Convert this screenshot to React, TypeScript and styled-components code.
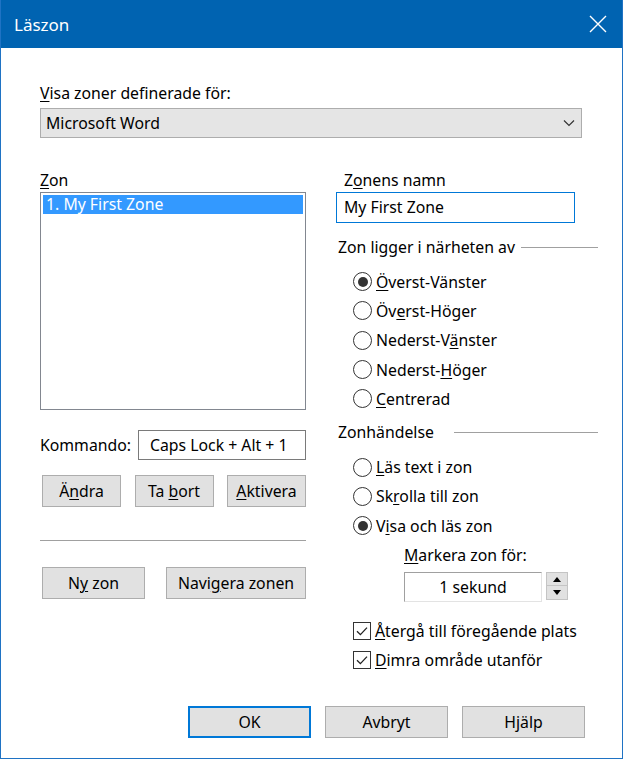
import styled, { createGlobalStyle } from 'styled-components';

const GlobalStyle = createGlobalStyle`
  html, body {
    margin: 0;
    padding: 0;
    background: #ffffff;
  }
  body {
    font-family: 'Noto Sans', 'Open Sans', sans-serif;
    color: #000000;
  }
`;

const FONT = `'Noto Sans', 'Open Sans', sans-serif`;

// 위치 라디오 옵션
const positions = [
  { pre: '', key: 'Ö', post: 'verst-Vänster', checked: true },
  { pre: 'Öv', key: 'e', post: 'rst-Höger', checked: false },
  { pre: 'Nederst-V', key: 'ä', post: 'nster', checked: false },
  { pre: 'Nederst-', key: 'H', post: 'öger', checked: false },
  { pre: '', key: 'C', post: 'entrerad', checked: false },
];

// 이벤트 라디오 옵션
const events = [
  { pre: '', key: 'L', post: 'äs text i zon', checked: false },
  { pre: 'Sk', key: 'r', post: 'olla till zon', checked: false },
  { pre: 'V', key: 'i', post: 'sa och läs zon', checked: true },
];

const Radio = ({ checked }: { checked: boolean }) => (
  <RadioCircle>{checked && <RadioDot />}</RadioCircle>
);

const CheckBox = () => (
  <CheckSquare>
    <svg width="14" height="14" viewBox="0 0 14 14">
      <path d="M2 7.2 L5.4 10.6 L12 3.6" fill="none" stroke="#222" strokeWidth="1.3" />
    </svg>
  </CheckSquare>
);

const App = () => {
  return (
    <>
      <GlobalStyle />
      <Window>
        <TitleBar>
          <TitleText>Läszon</TitleText>
          <CloseIcon width="18" height="18" viewBox="0 0 18 18">
            <path d="M1 1 L17 17 M17 1 L1 17" stroke="#ffffff" strokeWidth="1.4" />
          </CloseIcon>
        </TitleBar>

        <Body>
          <Label>
            <u>V</u>isa zoner definerade för:
          </Label>
          <Combo>
            <span>Microsoft Word</span>
            <svg width="12" height="8" viewBox="0 0 12 8">
              <path d="M1 1.5 L6 6.5 L11 1.5" fill="none" stroke="#333" strokeWidth="1.2" />
            </svg>
          </Combo>

          <Columns>
            <LeftColumn>
              <Label>
                <u>Z</u>on
              </Label>
              <ListBox>
                <ListItem selected>1. My First Zone</ListItem>
              </ListBox>

              <CommandRow>
                <Label>Kommando:</Label>
                <CommandBox>Caps Lock + Alt + 1</CommandBox>
              </CommandRow>

              <ButtonRow>
                <Button width={79}>
                  <span>
                    Ä<u>n</u>dra
                  </span>
                </Button>
                <Button width={79}>
                  <span>
                    Ta <u>b</u>ort
                  </span>
                </Button>
                <Button width={79}>
                  <span>
                    <u>A</u>ktivera
                  </span>
                </Button>
              </ButtonRow>

              <Separator />

              <ButtonRow>
                <Button width={103}>
                  <span>
                    N<u>y</u> zon
                  </span>
                </Button>
                <Button width={140}>
                  <span>
                    Navi<u>g</u>era zonen
                  </span>
                </Button>
              </ButtonRow>
            </LeftColumn>

            <RightColumn>
              <NameLabel>
                Z<u>o</u>nens namn
              </NameLabel>
              <TextBox>My First Zone</TextBox>

              <GroupHeader lineGap={6}>
                <span>Zon ligger i närheten av</span>
                <GroupLine />
              </GroupHeader>
              <OptionList>
                {positions.map((p, i) => (
                  <OptionRow key={i}>
                    <Radio checked={p.checked} />
                    <span>
                      {p.pre}
                      <u>{p.key}</u>
                      {p.post}
                    </span>
                  </OptionRow>
                ))}
              </OptionList>

              <GroupHeader lineGap={20}>
                <span>Zonhändelse</span>
                <GroupLine />
              </GroupHeader>
              <OptionList>
                {events.map((p, i) => (
                  <OptionRow key={i}>
                    <Radio checked={p.checked} />
                    <span>
                      {p.pre}
                      <u>{p.key}</u>
                      {p.post}
                    </span>
                  </OptionRow>
                ))}
              </OptionList>

              <MarkBlock>
                <Label>
                  <u>M</u>arkera zon för:
                </Label>
                <SpinRow>
                  <SpinField>1 sekund</SpinField>
                  <SpinButtons>
                    <SpinButton>
                      <svg width="8" height="5" viewBox="0 0 8 5">
                        <path d="M0 5 L4 0 L8 5 Z" fill="#000" />
                      </svg>
                    </SpinButton>
                    <SpinButton>
                      <svg width="8" height="5" viewBox="0 0 8 5">
                        <path d="M0 0 L4 5 L8 0 Z" fill="#000" />
                      </svg>
                    </SpinButton>
                  </SpinButtons>
                </SpinRow>
              </MarkBlock>

              <CheckList>
                <OptionRow>
                  <CheckBox />
                  <span>
                    <u>Å</u>tergå till föregående plats
                  </span>
                </OptionRow>
                <OptionRow>
                  <CheckBox />
                  <span>
                    <u>D</u>imra område utanför
                  </span>
                </OptionRow>
              </CheckList>
            </RightColumn>
          </Columns>
        </Body>

        <Footer>
          <Button width={123} isDefault>
            OK
          </Button>
          <Button width={123}>Avbryt</Button>
          <Button width={123}>Hjälp</Button>
        </Footer>
      </Window>
    </>
  );
};

export default App;

const Window = styled.div`
  display: flex;
  flex-direction: column;
  width: 623px;
  height: 759px;
  box-sizing: border-box;
  border: 1px solid #1f73c4;
  border-top: none;
  background: #ffffff;
  font-family: ${FONT};
  font-size: 15.8px;
  overflow: hidden;

  u {
    text-decoration-thickness: 1px;
    text-underline-offset: 2px;
  }
`;

const TitleBar = styled.div`
  display: flex;
  align-items: center;
  justify-content: space-between;
  height: 48px;
  margin: 0 -1px;
  padding: 0 16px 0 14px;
  background: #0063b1;
  color: #ffffff;
`;

const TitleText = styled.div`
  font-size: 17px;
`;

const CloseIcon = styled.svg`
  display: block;
`;

const Body = styled.div`
  flex: 1;
  display: flex;
  flex-direction: column;
  padding: 35px 24px 0 39px;
`;

const Label = styled.div`
  height: 20px;
  line-height: 20px;
  white-space: nowrap;
`;

const Combo = styled.div`
  display: flex;
  align-items: center;
  justify-content: space-between;
  height: 30px;
  margin-top: 5px;
  margin-right: 16px;
  padding: 0 6px 0 5px;
  box-sizing: border-box;
  background: #e5e5e5;
  border: 1px solid #adadad;
`;

const Columns = styled.div`
  display: grid;
  grid-template-columns: 266px 1fr;
  column-gap: 30px;
  margin-top: 32px;
`;

const LeftColumn = styled.div`
  display: flex;
  flex-direction: column;
`;

const ListBox = styled.div`
  height: 218px;
  margin-top: 2px;
  padding: 2px;
  box-sizing: border-box;
  border: 1px solid #828790;
`;

const ListItem = styled.div<{ selected?: boolean }>`
  height: 19px;
  line-height: 19px;
  padding-left: 3px;
  background: ${(props) => (props.selected ? '#3399ff' : 'transparent')};
  color: ${(props) => (props.selected ? '#ffffff' : '#000000')};
`;

const CommandRow = styled.div`
  display: flex;
  align-items: center;
  justify-content: space-between;
  margin-top: 20px;
`;

const CommandBox = styled.div`
  width: 168px;
  height: 30px;
  line-height: 28px;
  padding-left: 11px;
  box-sizing: border-box;
  border: 1px solid #7a7a7a;
  white-space: nowrap;
  overflow: hidden;
`;

const ButtonRow = styled.div`
  display: flex;
  justify-content: space-between;
  margin-top: 15px;
  padding-left: 2px;

  & + div + & {
    margin-top: 26px;
  }
`;

const Button = styled.div<{ width: number; isDefault?: boolean }>`
  display: flex;
  align-items: center;
  justify-content: center;
  width: ${(props) => props.width}px;
  height: 32px;
  box-sizing: border-box;
  background: #e1e1e1;
  border: ${(props) => (props.isDefault ? '2px solid #0078d7' : '1px solid #adadad')};
  white-space: nowrap;
`;

const Separator = styled.div`
  height: 1px;
  margin-top: 33px;
  background: #a0a0a0;
`;

const RightColumn = styled.div`
  display: flex;
  flex-direction: column;
`;

const NameLabel = styled(Label)`
  padding-left: 8px;
`;

const TextBox = styled.div`
  width: 239px;
  height: 31px;
  margin-top: 2px;
  line-height: 29px;
  padding-left: 7px;
  box-sizing: border-box;
  border: 1px solid #0078d7;
`;

const GroupHeader = styled.div<{ lineGap: number }>`
  display: flex;
  align-items: center;
  gap: ${(props) => props.lineGap}px;
  height: 20px;
  margin-top: 14px;
  padding-left: 2px;
  white-space: nowrap;

  & + div + & {
    margin-top: 9px;
  }
`;

const GroupLine = styled.div`
  flex: 1;
  height: 1px;
  background: #a0a0a0;
`;

const OptionList = styled.div`
  display: flex;
  flex-direction: column;
  margin-top: 10px;
  padding-left: 17px;
`;

const OptionRow = styled.div`
  display: flex;
  align-items: center;
  gap: 4px;
  height: 29.3px;
  white-space: nowrap;
`;

const RadioCircle = styled.div`
  display: flex;
  align-items: center;
  justify-content: center;
  width: 19px;
  height: 19px;
  box-sizing: border-box;
  border: 1px solid #333333;
  border-radius: 50%;
  flex-shrink: 0;
`;

const RadioDot = styled.div`
  width: 10px;
  height: 10px;
  border-radius: 50%;
  background: #333333;
`;

const MarkBlock = styled.div`
  display: flex;
  flex-direction: column;
  gap: 2px;
  margin-top: 5px;
  padding-left: 68px;
`;

const SpinRow = styled.div`
  display: flex;
  align-items: flex-start;
  gap: 4px;
  margin-top: 5px;
`;

const SpinField = styled.div`
  width: 138px;
  height: 30px;
  line-height: 29px;
  text-align: center;
  box-sizing: border-box;
  border-top: 1px solid #a0a0a0;
  border-left: 1px solid #a0a0a0;
  border-right: 1px solid #e3e3e3;
  border-bottom: 1px solid #e3e3e3;
`;

const SpinButtons = styled.div`
  display: flex;
  flex-direction: column;
  width: 22px;
`;

const SpinButton = styled.div`
  display: flex;
  align-items: center;
  justify-content: center;
  height: 14px;
  box-sizing: border-box;
  background: #e1e1e1;
  border: 1px solid #c4c4c4;

  & + & {
    border-top: none;
  }
`;

const CheckList = styled.div`
  display: flex;
  flex-direction: column;
  margin-top: 14px;
  padding-left: 17px;
`;

const CheckSquare = styled.div`
  display: flex;
  align-items: center;
  justify-content: center;
  width: 18px;
  height: 18px;
  box-sizing: border-box;
  border: 1px solid #333333;
  flex-shrink: 0;
`;

const Footer = styled.div`
  display: flex;
  justify-content: flex-end;
  gap: 14px;
  padding: 0 37px 20px 0;
`;
